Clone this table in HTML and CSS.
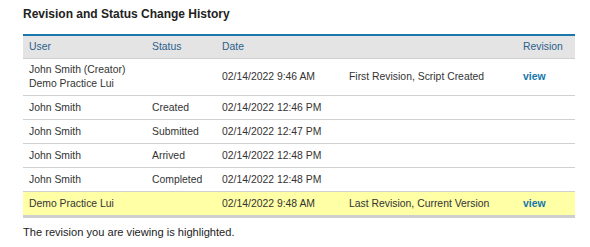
FILE: index.html
```html
<!DOCTYPE html>
<html>
<head>
<meta charset="utf-8">
<link rel="stylesheet" href="styles.css">
</head>
<body>
<div class="page">
  <h2 class="title">Revision and Status Change History</h2>
  <table class="history">
    <colgroup>
      <col class="c-user"><col class="c-status"><col class="c-date"><col class="c-desc"><col class="c-rev">
    </colgroup>
    <thead>
      <tr><th>User</th><th>Status</th><th>Date</th><th></th><th>Revision</th></tr>
    </thead>
    <tbody>
      <tr class="tall"><td>John Smith (Creator)<br>Demo Practice Lui</td><td></td><td>02/14/2022 9:46 AM</td><td>First Revision, Script Created</td><td><a class="view" href="#">view</a></td></tr>
      <tr><td>John Smith</td><td>Created</td><td>02/14/2022 12:46 PM</td><td></td><td></td></tr>
      <tr><td>John Smith</td><td>Submitted</td><td>02/14/2022 12:47 PM</td><td></td><td></td></tr>
      <tr><td>John Smith</td><td>Arrived</td><td>02/14/2022 12:48 PM</td><td></td><td></td></tr>
      <tr><td>John Smith</td><td>Completed</td><td>02/14/2022 12:48 PM</td><td></td><td></td></tr>
      <tr class="current"><td>Demo Practice Lui</td><td></td><td>02/14/2022 9:48 AM</td><td>Last Revision, Current Version</td><td><a class="view" href="#">view</a></td></tr>
    </tbody>
  </table>
  <p class="note">The revision you are viewing is highlighted.</p>
</div>
</body>
</html>
```
FILE: styles.css
```css
html, body {
  margin: 0;
  padding: 0;
  background: #ffffff;
}
.page {
  padding: 7px 15px 0 23px;
  font-family: "Liberation Sans", Arial, sans-serif;
  color: #333333;
}
.title {
  margin: 0 0 12px 0;
  font-size: 12px;
  line-height: 15px;
  font-weight: bold;
  color: #222222;
}
.history {
  width: 552px;
  border-collapse: collapse;
  table-layout: fixed;
  font-size: 10.4px;
  border-top: 2px solid #1a78ad;
  border-bottom: 3px solid #cfcfcf;
}
.c-user { width: 123px; }
.c-status { width: 70px; }
.c-date { width: 127px; }
.c-desc { width: 174px; }
.c-rev { width: 58px; }
.history th {
  background: #e4e4e4;
  color: #2b5f8c;
  font-weight: normal;
  text-align: left;
  height: 23px;
  padding: 0 6px;
  border-bottom: 1px solid #cfcfcf;
  box-sizing: border-box;
}
.history td {
  height: 23px;
  padding: 0 6px;
  line-height: 13px;
  border-bottom: 1px solid #d0d0d0;
  vertical-align: middle;
}
.history tr.tall td {
  height: 36px;
  line-height: 13.5px;
}
.history tr.current td {
  background: #ffffa6;
  border-bottom: none;
  height: 23px;
}
.view {
  color: #1577ad;
  font-weight: bold;
  text-decoration: none;
}
.note {
  margin: 7px 0 0 0;
  font-size: 11.1px;
  line-height: 14px;
  color: #222222;
}
```
